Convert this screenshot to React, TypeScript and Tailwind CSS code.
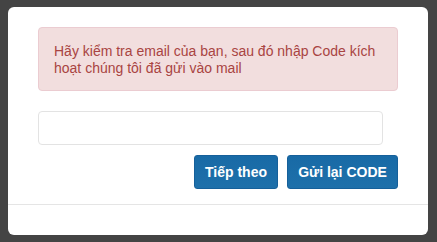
export default function App() {
  return (
    <div className="h-[242px] w-[437px] bg-[#444444] pt-[7px] pl-[8px]" style={{ fontFamily: '"Liberation Sans", Arial, sans-serif' }}>
      <div className="h-[228px] w-[420px] rounded-[6px] bg-white">
        <div className="px-[30px] pt-[20px]">
          <div className="h-[64px] rounded-[4px] border border-[#ebccd1] bg-[#f2dede] px-[15px] pt-[15px] text-[14px] leading-[16.5px] text-[#a94442]">
            Hãy kiểm tra email của bạn, sau đó nhập Code kích hoạt chúng tôi đã gửi vào mail
          </div>
          <input className="mt-[20px] block h-[34px] w-[345px] rounded-[4px] border border-[#e3e3e3] bg-white px-3 text-[14px] outline-none" />
          <div className="mt-[10px] flex justify-end gap-[9px]">
            <button className="h-[34px] w-[84px] rounded-[3px] border border-[#16609a] bg-gradient-to-b from-[#186aa6] to-[#1e70aa] text-[14px] font-bold text-white">
              Tiếp theo
            </button>
            <button className="h-[34px] w-[111px] rounded-[3px] border border-[#16609a] bg-gradient-to-b from-[#186aa6] to-[#1e70aa] text-[14px] font-bold text-white">
              Gửi lại CODE
            </button>
          </div>
        </div>
        <div className="mt-[15px] border-t border-[#e5e5e5]" />
      </div>
    </div>
  );
}
